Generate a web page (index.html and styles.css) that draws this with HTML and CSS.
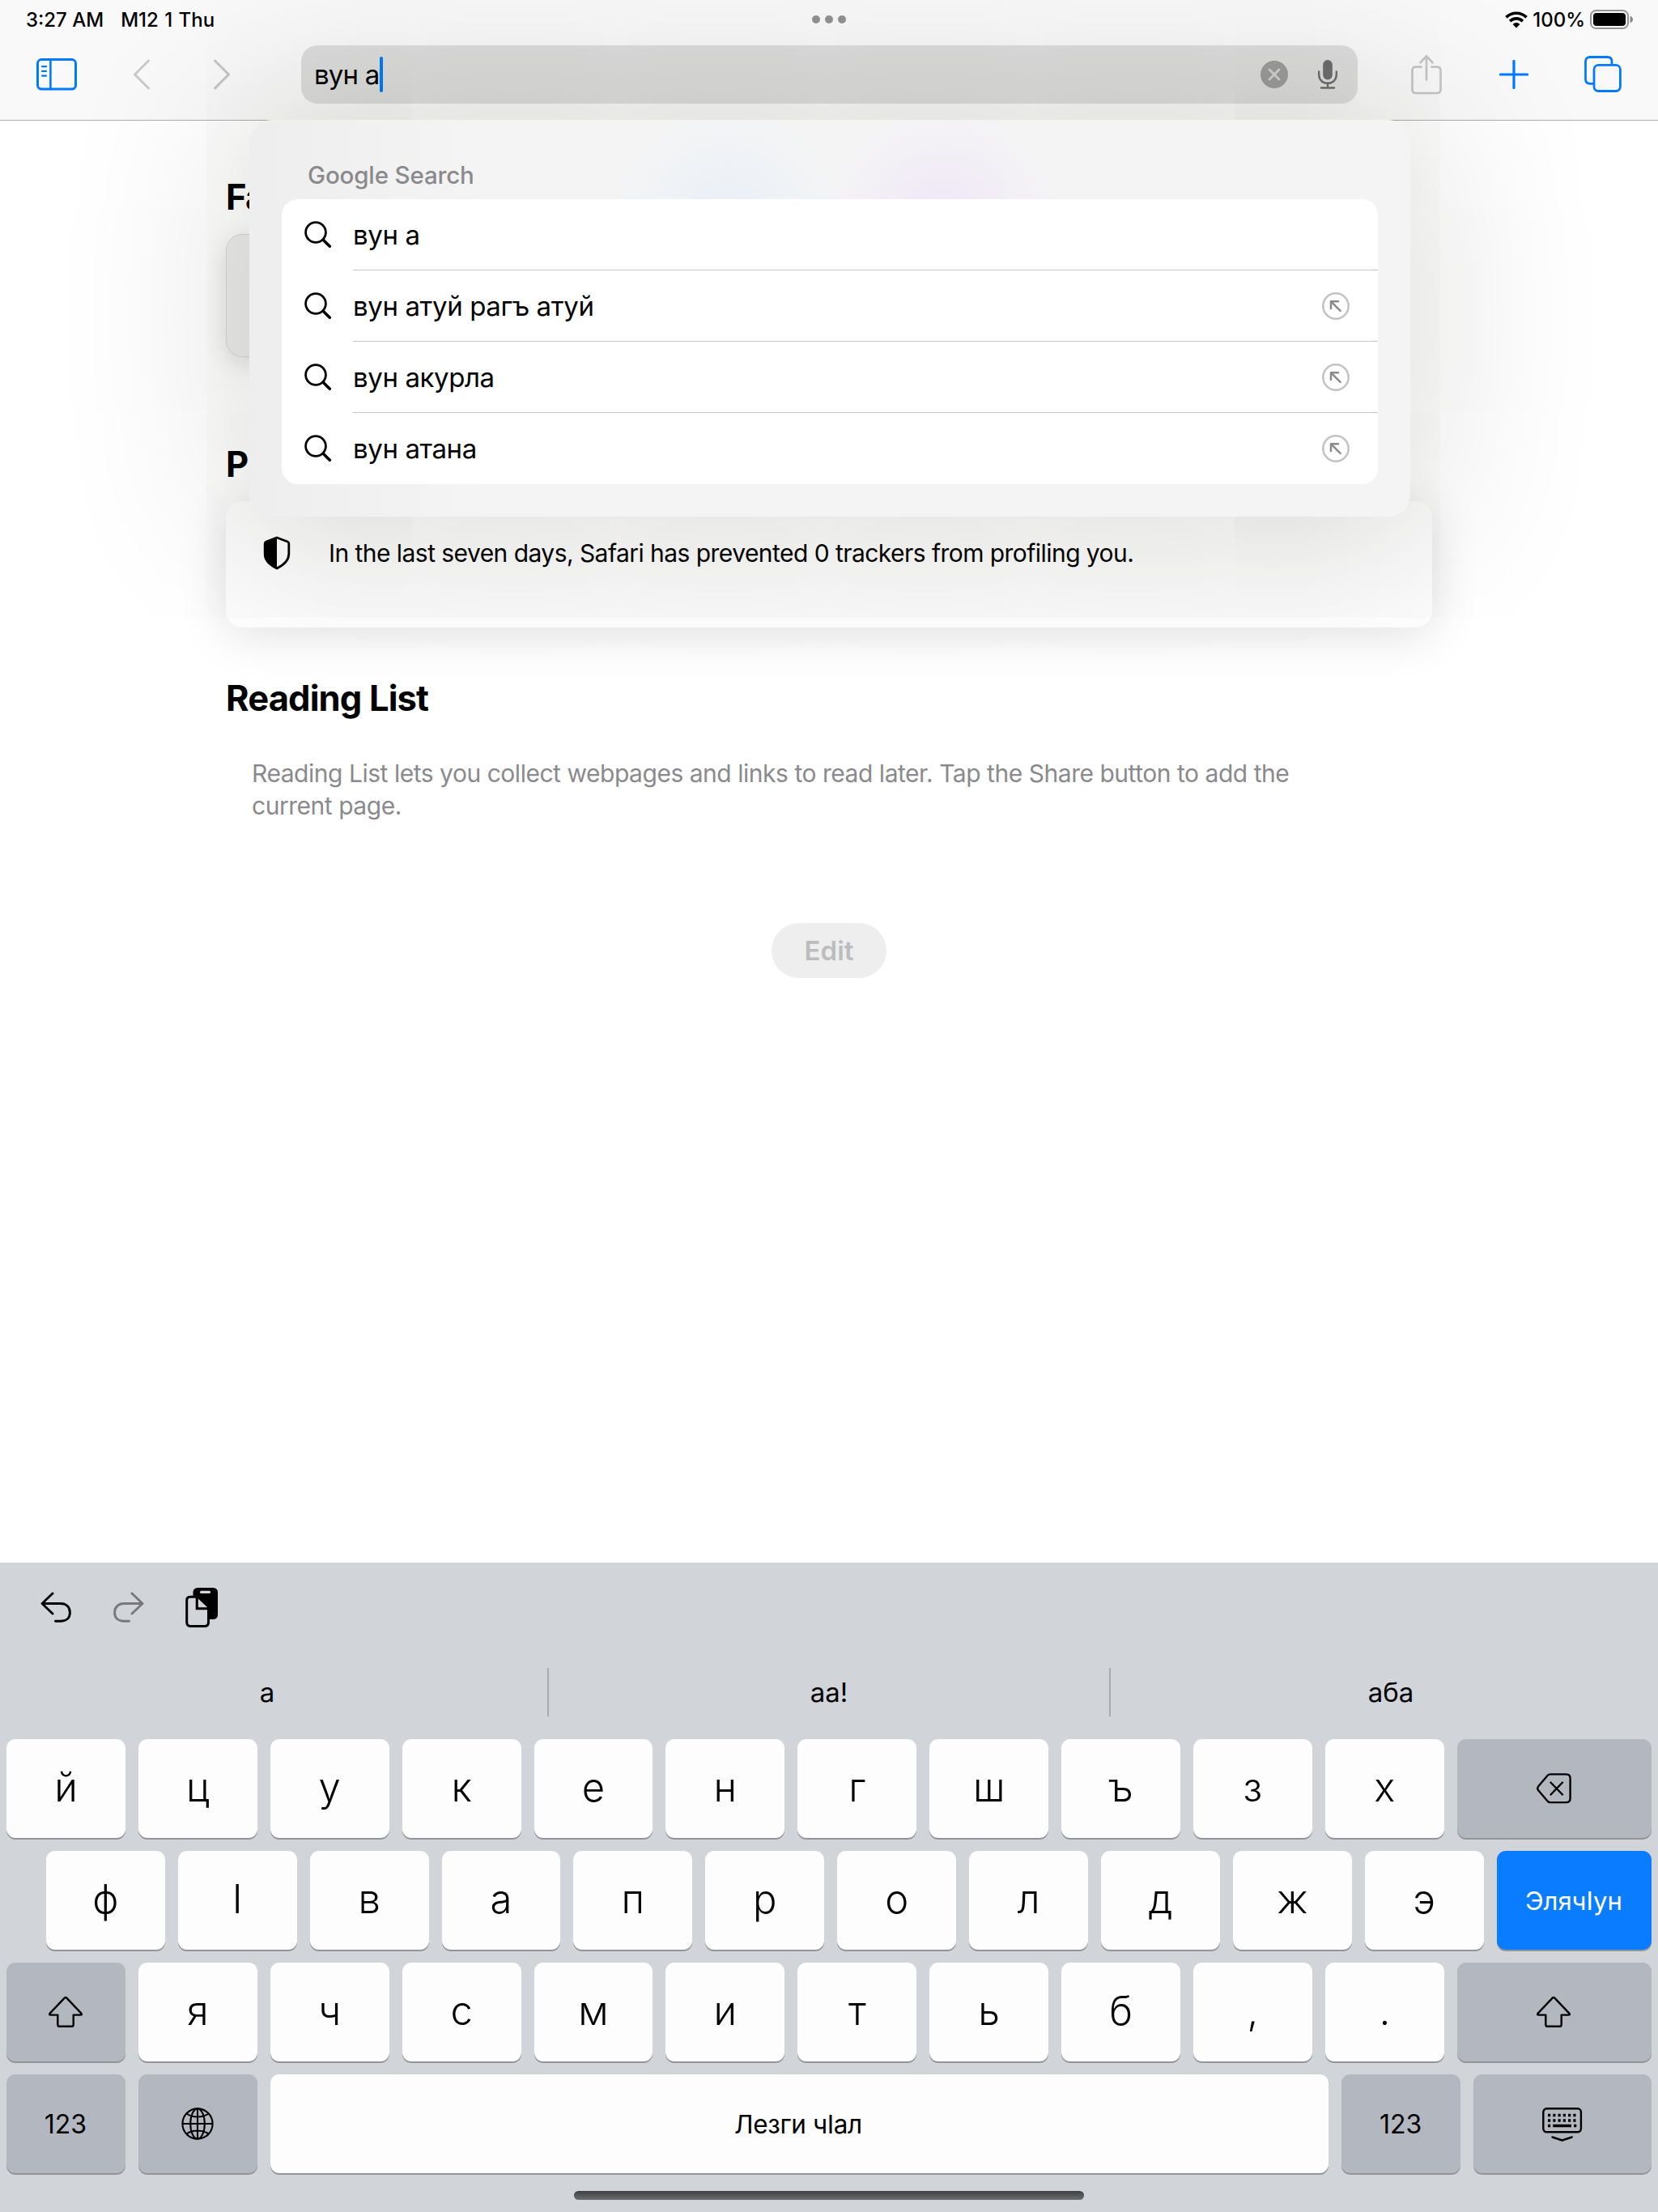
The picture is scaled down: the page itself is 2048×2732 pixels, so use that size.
FILE: index.html
```html
<!DOCTYPE html>
<html lang="lez">
<head>
<meta charset="utf-8">
<title>Start Page</title>
<link rel="stylesheet" href="styles.css">
</head>
<body>
<svg class="defs" width="0" height="0" aria-hidden="true">
  <symbol id="search" viewBox="0 0 34 34"><g fill="none" stroke="#000" stroke-linecap="round"><circle cx="14" cy="14" r="12.4" stroke-width="2.8"/><path d="M23.2 23.2 31.3 31.3" stroke-width="3.6"/></g></symbol>
  <symbol id="fill" viewBox="0 0 34 34"><g fill="none" stroke-linecap="round" stroke-linejoin="round"><circle cx="17" cy="17" r="15.7" stroke="#c4c4c6" stroke-width="2.6"/><path d="M11 20V11.2H20M11.6 11.8 22.6 22.8" stroke="#8a8a8e" stroke-width="2.5"/></g></symbol>
  <symbol id="shift" viewBox="0 0 44 40"><path d="M20.7 2.6 2.9 21.4C1.6 22.8 2 23.6 3.6 23.6H12.3V35.4Q12.3 37.8 14.7 37.8H29.3Q31.7 37.8 31.7 35.4V23.6H40.4C42 23.6 42.4 22.8 41.1 21.4L23.3 2.6Q22 1.3 20.7 2.6Z" fill="none" stroke="#000" stroke-width="2.4" stroke-linejoin="round"/></symbol>
</svg>
<div class="screen">
  <header class="topbar">
    <div class="status">
      <div class="clock"><span class="time">3:27 AM</span><span class="date">M12 1 Thu</span></div>
      <div class="dots"><i></i><i></i><i></i></div>
      <div class="system">
        <svg width="28" height="21" viewBox="0 0 28 21"><g fill="none" stroke="#000" stroke-width="3.7"><path d="M1.5 7.4A17.8 17.8 0 0 1 26.5 7.4"/><path d="M6.1 12.1A11.2 11.2 0 0 1 21.9 12.1"/></g><path d="M14 20.4 9.6 15.9A6.3 6.3 0 0 1 18.4 15.9Z"/></svg>
        <span class="percent">100%</span>
        <svg width="54" height="24" viewBox="0 0 54 24"><rect x="1" y="1" width="46" height="22" rx="6.5" fill="none" stroke="#000" stroke-opacity=".4" stroke-width="2"/><rect x="4" y="4" width="40" height="16" rx="4"/><path d="M49.5 7.7Q53 9 53 12T49.5 16.3Z" fill-opacity=".45"/></svg>
      </div>
    </div>
    <div class="toolbar">
      <svg class="sidebar" width="50" height="40" viewBox="0 0 50 40"><g fill="none" stroke="#007aff" stroke-linecap="round"><rect x="1.5" y="1.6" width="47" height="36.4" rx="4.8" stroke-width="3"/><path d="M17.4 2V38" stroke-width="2.6"/><path d="M7 10.2H12M7 15.9H12M7 21.6H12" stroke-width="2.2"/></g></svg>
      <svg class="back" width="22" height="38" viewBox="0 0 22 38"><path d="M19.5 2 2.5 19 19.5 36" fill="none" stroke="#c9c9c9" stroke-width="3" stroke-linecap="round" stroke-linejoin="round"/></svg>
      <svg class="forward" width="22" height="38" viewBox="0 0 22 38"><path d="M2.5 2 19.5 19 2.5 36" fill="none" stroke="#c4c4c3" stroke-width="3" stroke-linecap="round" stroke-linejoin="round"/></svg>
      <div class="address">
        <span class="query">вун а</span><i class="caret"></i>
        <svg class="clear" width="34" height="34" viewBox="0 0 34 34"><circle cx="17" cy="17" r="17" fill="#9c9c9b"/><path d="M11 11 23 23M23 11 11 23" stroke="#d3d3d2" stroke-width="2.8" stroke-linecap="round"/></svg>
        <svg class="mic" width="24" height="36" viewBox="0 0 24 36"><rect x="6.2" y="0" width="11.6" height="24.4" rx="5.8" fill="#6d6d6f"/><path d="M1.2 14.5V18C1.2 24.4 5.6 28.8 12 28.8S22.8 24.4 22.8 18V14.5M12 29V34M4 34.5H20" fill="none" stroke="#6d6d6f" stroke-width="2.4" stroke-linecap="round"/></svg>
      </div>
      <svg class="share" width="38" height="50" viewBox="0 0 38 50"><path d="M12.5 15.7H6Q1.5 15.7 1.5 20.2V43.5Q1.5 48 6 48H32Q36.5 48 36.5 43.5V20.2Q36.5 15.7 32 15.7H25.5M19 31.5V3M11.5 10.2 19 2.3 26.5 10.2" fill="none" stroke="#c6c6c6" stroke-width="2.7" stroke-linecap="round" stroke-linejoin="round"/></svg>
      <svg class="plus" width="36" height="36" viewBox="0 0 36 36"><path d="M18 1.5V34.5M1.5 18H34.5" stroke="#007aff" stroke-width="3.2" stroke-linecap="round"/></svg>
      <svg class="tabs" width="46" height="46" viewBox="0 0 46 46"><g fill="none" stroke="#007aff" stroke-width="2.8"><path d="M11.5 34.3H7Q1.5 34.3 1.5 28.8V7Q1.5 1.5 7 1.5H28.5Q34 1.5 34 7V10.5"/><rect x="12" y="11.3" width="32.4" height="32.2" rx="5.5"/></g></svg>
    </div>
  </header>

  <main class="start">
    <h2 class="covered">Fa</h2>
    <div class="tile"></div>
    <h2 class="covered privacy-title">P</h2>
    <section class="privacy">
      <svg width="34" height="42" viewBox="0 0 34 42"><path d="M17 2 30.2 7Q31.8 7.7 31.8 9.3V22C31.8 30.5 25.5 35.8 17 40 8.5 35.8 2.2 30.5 2.2 22V9.3Q2.2 7.7 3.8 7Z" fill="none" stroke="#000" stroke-width="2.8" stroke-linejoin="round"/><path d="M17 1.5 2.8 7.2Q1 8 1 10V22C1 31 8 37 17 41Z"/></svg>
      <span>In the last seven days, Safari has prevented 0 trackers from profiling you.</span>
    </section>
    <h2 class="reading-title">Reading List</h2>
    <p class="reading">Reading List lets you collect webpages and links to read later. Tap the Share button to add the<br>current page.</p>
    <div class="edit">Edit</div>
  </main>

  <section class="suggestions">
    <h3>Google Search</h3>
    <ul>
      <li><svg class="glass"><use href="#search"/></svg><div><span>вун а</span></div></li>
      <li><svg class="glass"><use href="#search"/></svg><div><span>вун атуй рагъ атуй</span><svg class="arrow"><use href="#fill"/></svg></div></li>
      <li><svg class="glass"><use href="#search"/></svg><div><span>вун акурла</span><svg class="arrow"><use href="#fill"/></svg></div></li>
      <li><svg class="glass"><use href="#search"/></svg><div><span>вун атана</span><svg class="arrow"><use href="#fill"/></svg></div></li>
    </ul>
  </section>

  <section class="keyboard">
    <div class="shortcuts">
      <svg width="38" height="38" viewBox="0 0 38 38"><path d="M15 2 2 14.5 15 27M2.5 14.5H24.5C32 14.5 36.4 19 36.4 25.7S32 36.2 24.5 36.2H18.5" fill="none" stroke="#000" stroke-width="2.9" stroke-linecap="round" stroke-linejoin="round"/></svg>
      <svg class="redo" width="38" height="38" viewBox="0 0 38 38"><path d="M23 2 36 14.5 23 27M35.5 14.5H13.5C6 14.5 1.6 19 1.6 25.7S6 36.2 13.5 36.2H19.5" fill="none" stroke="#77787b" stroke-width="2.9" stroke-linecap="round" stroke-linejoin="round"/></svg>
      <svg class="paste" width="41" height="50" viewBox="0 0 41 50"><rect x="9.500" y="1" width="30.500" height="39" rx="5.500"/><rect x="18" y="4.700" width="13" height="3.200" rx="1.500" fill="#d1d4d9"/><path d="M5.700 12.200H14.200V26.700H28.500V43.500Q28.500 48.500 23.800 48.500H6.400Q1.700 48.500 1.700 43.500V16.700Q1.700 12.200 5.700 12.200Z" fill="#d1d4d9" stroke="#000" stroke-width="3"/><path d="M15.800 14.500 27.300 25.300H17.300Q15.800 25.300 15.800 23.800Z" fill="#d1d4d9"/></svg>
    </div>
    <div class="predictions"><span>а</span><span>аа!</span><span>аба</span></div>
    <div class="keys">
      <div class="row"><b>й</b><b>ц</b><b>у</b><b>к</b><b>е</b><b>н</b><b>г</b><b>ш</b><b>ъ</b><b>з</b><b>х</b><b class="dark grow"><svg width="43" height="38" viewBox="0 0 43 38"><path d="M17 1.4H36.5Q41.6 1.4 41.6 6.5V31Q41.6 36.1 36.5 36.1H17Q15 36.1 13.5 34.6L2 21Q.5 18.8 2 16.6L13.5 3Q15 1.4 17 1.4ZM17.5 11.5 32 26.5M32 11.5 17.5 26.5" fill="none" stroke="#000" stroke-width="2.4" stroke-linecap="round" stroke-linejoin="round"/></svg></b></div>
      <div class="row inset"><b>ф</b><b>Ӏ</b><b>в</b><b>а</b><b>п</b><b>р</b><b>о</b><b>л</b><b>д</b><b>ж</b><b>э</b><b class="go grow">ЭлячӀун</b></div>
      <div class="row"><b class="dark"><svg width="44" height="40"><use href="#shift"/></svg></b><b>я</b><b>ч</b><b>с</b><b>м</b><b>и</b><b>т</b><b>ь</b><b>б</b><b>,</b><b>.</b><b class="dark grow"><svg width="44" height="40"><use href="#shift"/></svg></b></div>
      <div class="row"><b class="dark label">123</b><b class="dark"><svg width="40" height="40" viewBox="0 0 40 40"><g fill="none" stroke="#000" stroke-width="2.1"><circle cx="20" cy="20" r="18.6"/><ellipse cx="20" cy="20" rx="8.8" ry="18.6"/><path d="M20 1.4V38.6M1.4 20H38.6M6.5 7.5Q12 11.5 20 11.5T33.5 7.5M6.5 32.5Q12 28.5 20 28.5T33.5 32.5"/></g></svg></b><b class="grow space">Лезги чӀал</b><b class="dark label">123</b><b class="dark hide"><svg width="50" height="42" viewBox="0 0 50 42"><rect x="1.3" y="1.3" width="46.6" height="29" rx="4.2" fill="none" stroke="#000" stroke-width="2.4"/><path d="M7 9.5H42.5M7 16H42.5" stroke="#000" stroke-width="3.5" stroke-dasharray="3.2 3.06"/><path d="M7 22.5H10.2M13.2 22.5H36M39 22.5H42.3" stroke="#000" stroke-width="3.4"/><path d="M12.5 36.5 24.6 40.5 36.7 36.5" fill="none" stroke="#000" stroke-width="2.4" stroke-linecap="round" stroke-linejoin="round"/></svg></b></div>
    </div>
    <div class="home"></div>
  </section>
</div>
</body>
</html>
```
FILE: styles.css
```css
* { box-sizing: border-box; }
body { margin: 0; background: #fff; color: #000; font-family: Inter, "Liberation Sans", sans-serif; }
svg { display: block; flex: none; }
.defs { position: absolute; }
.screen { position: relative; width: 2048px; height: 2732px; display: flex; flex-direction: column; overflow: hidden; }

.topbar { height: 149px; background: #f9f9f9; border-bottom: 1px solid #acacac; }
.status { height: 48px; display: flex; align-items: center; justify-content: space-between; padding: 0 30px 0 32px; font-size: 24px; font-weight: 500; }
.clock { display: flex; width: 399px; gap: 21px; }
.date { word-spacing: 1px; }
.dots { display: flex; gap: 6px; }
.dots i { width: 10px; height: 10px; border-radius: 50%; background: #929292; }
.system { display: flex; align-items: center; justify-content: flex-end; width: 401px; gap: 6px; }
.percent { width: 65px; text-align: right; white-space: nowrap; }

.toolbar { height: 88px; display: flex; align-items: center; padding: 0 44px 0 45px; }
.back { margin-left: 69px; }
.forward { margin-left: 77px; }
.address { width: 1305px; height: 72px; margin-left: 87px; padding: 0 25px 0 16px; display: flex; align-items: center; border-radius: 20px; background: rgba(0, 0, 0, .11); font-size: 33px; }
.query { letter-spacing: -.8px; }
.caret { width: 4px; height: 44px; background: #007aff; border-radius: 2px; }
.clear { margin-left: auto; }
.mic { margin-left: 37px; }
.share { margin-left: 66px; }
.plus { margin-left: 71px; }
.tabs { margin-left: 69px; }

.start { flex: 1; padding: 66px 279px 0; }
h2 { margin: 0; font-size: 43.5px; line-height: 56px; font-weight: 700; letter-spacing: -.85px; }
.covered { width: 29px; overflow: hidden; }
.tile { width: 152px; height: 152px; margin-top: 18px; border-radius: 20px; background: #ececeb; border: 1px solid #d8d8d8; box-shadow: 0 8px 30px rgba(0, 0, 0, .12); }
.privacy-title { margin-top: 104px; }
.privacy { height: 156px; margin-top: 18px; padding: 43px 46px; display: flex; gap: 47px; border-radius: 20px; background: #fcfcfc; box-shadow: 0 8px 60px rgba(0, 0, 0, .13); font-size: 30px; line-height: 42px; letter-spacing: -.55px; }
.reading-title { margin-top: 59px; }
.reading { margin: 45px 0 0 32px; color: #8a8a8e; font-size: 30px; line-height: 40px; letter-spacing: -.47px; white-space: nowrap; }
.edit { width: 142px; height: 68px; margin: 125px auto 0; border-radius: 34px; background: #eee; color: #bcbcbe; font-size: 33px; font-weight: 600; line-height: 68px; text-align: center; }

.suggestions { position: absolute; left: 308px; top: 148px; width: 1434px; height: 490px; padding: 48px 40px 40px; border-radius: 28px; box-shadow: 0 0 220px 10px rgba(20, 20, 10, .19);
  background: radial-gradient(circle at 590px 130px, rgba(228, 238, 250, .7), rgba(228, 238, 250, 0) 150px), radial-gradient(circle at 856px 130px, rgba(238, 226, 250, .75), rgba(238, 226, 250, 0) 150px), linear-gradient(90deg, #eeeeee, #f4f4f4 300px); }
.suggestions h3 { margin: 0 0 10px 32px; font-size: 29.5px; line-height: 40px; font-weight: 500; letter-spacing: -.15px; color: #8a8a8e; }
.suggestions ul { margin: 0; padding: 0 0 0 28px; list-style: none; border-radius: 20px; background: #fff; overflow: hidden; }
.suggestions li { height: 88px; display: flex; align-items: center; gap: 26px; }
.glass { width: 34px; height: 34px; }
.suggestions li div { flex: 1; height: 88px; padding: 0 35px 0 0; display: flex; align-items: center; justify-content: space-between; border-bottom: 1px solid #c6c6c8; font-size: 33px; letter-spacing: -.4px; }
.suggestions li:last-child div { border-bottom: 0; }
.arrow { width: 34px; height: 34px; }

.keyboard { height: 802px; background: #d1d4d9; }
.shortcuts { height: 110px; display: flex; align-items: center; padding: 0 50px; gap: 51.500px; }
.predictions { height: 100px; display: flex; align-items: center; margin: 0 -16px; font-size: 33px; }
.predictions span { flex: 1; height: 60px; line-height: 60px; text-align: center; }
.predictions span + span { border-left: 2px solid #a9abb0; }
.keys { padding: 8px 8px 0; display: flex; flex-direction: column; gap: 16px; }
.row { display: flex; gap: 16px; }
.inset { padding-left: 48.9px; }
.row b { width: 146.9px; height: 122px; padding-bottom: 3px; display: flex; align-items: center; justify-content: center; border-radius: 11px; background: #fdfdfd; box-shadow: 0 2px 0 #929498; font-size: 49px; font-weight: 300; }
.row b.grow { flex: 1; }
.row b.dark { padding: 0 1px 0 0; background: #b3b7c0; }
.row b.go { padding: 0 1px 0 0; background: #0a7cff; color: #fff; font-size: 31px; font-weight: 400; }
.row b.label, .row b.space { padding-bottom: 0; font-size: 32px; font-weight: 400; }
.row b.space { padding-right: 3px; font-size: 31.5px; letter-spacing: -.4px; }
.row b.hide { width: 220px; padding: 2px 0 0; }
.home { width: 630px; height: 11px; margin: 22px auto 0; border-radius: 6px; background: linear-gradient(#3d3f40, #6c6d6f); }
```
